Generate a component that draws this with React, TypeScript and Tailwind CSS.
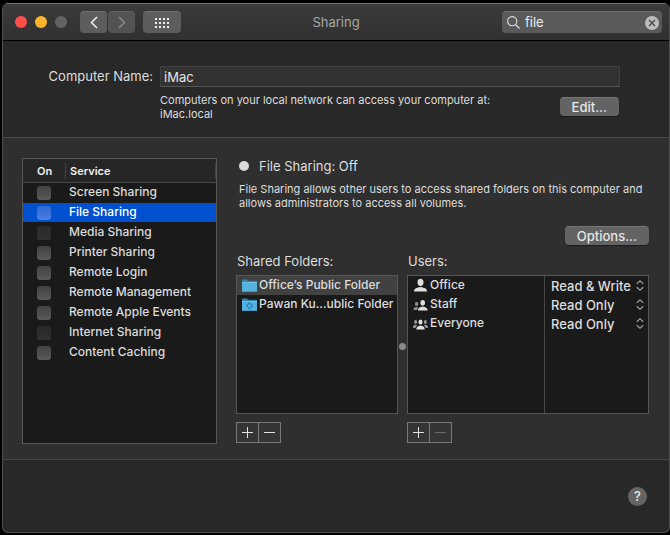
import { useState } from "react";
import type { ReactNode } from "react";

type Service = { name: string; available: boolean };

const services: Service[] = [
  { name: "Screen Sharing", available: true },
  { name: "File Sharing", available: true },
  { name: "Media Sharing", available: false },
  { name: "Printer Sharing", available: true },
  { name: "Remote Login", available: true },
  { name: "Remote Management", available: true },
  { name: "Remote Apple Events", available: true },
  { name: "Internet Sharing", available: false },
  { name: "Content Caching", available: true },
];

const folders = [
  { name: "Office’s Public Folder", dropBox: false },
  { name: "Pawan Ku...ublic Folder", dropBox: true },
];

function FolderIcon({ dropBox }: { dropBox: boolean }) {
  return (
    <svg width="15" height="13" viewBox="0 0 15 13" aria-hidden="true" className="shrink-0">
      <path d="M0 1.2Q0 .5.7.5H5l1.2 1.3H15V4H0z" fill="#2f86ad" />
      <rect y="3" width="15" height="10" rx=".5" fill="#56b1dc" />
      <path d="M0 3h15v1H0z" fill="#6fc2e6" />
      <path d="M0 12h15v1H0z" fill="#4399c4" />
      {dropBox && <path d="M7.5 4.8 10.3 7.8 7.5 10.8 4.7 7.8z" fill="#56b1dc" stroke="#2b86cb" strokeWidth="1.4" />}
    </svg>
  );
}

function OneUserIcon() {
  return (
    <svg width="15" height="14" viewBox="0 0 15 14" aria-hidden="true" className="shrink-0">
      <ellipse cx="7.5" cy="4.300" rx="3" ry="3.600" fill="#dfdfdf" />
      <path d="M1 13.5c0-3 2-3.800 6.500-4.600 4.500.8 6.500 1.600 6.500 4.600z" fill="#dfdfdf" />
    </svg>
  );
}

function TwoUsersIcon() {
  return (
    <svg width="15" height="14" viewBox="0 0 15 14" aria-hidden="true" className="shrink-0">
      <ellipse cx="3.600" cy="7" rx="1.700" ry="2.100" fill="#8f8f8f" />
      <path d="M.5 13c0-2.200 1.300-3 3.100-3 .8 0 1.200.2 1.500.4L4 13z" fill="#8f8f8f" />
      <ellipse cx="9.700" cy="5.800" rx="2.300" ry="2.800" fill="#dfdfdf" />
      <path d="M5 13.500c0-2.600 1.600-3.400 4.700-4 3.100.6 4.800 1.400 4.800 4z" fill="#dfdfdf" />
    </svg>
  );
}

function ThreeUsersIcon() {
  return (
    <svg width="15" height="14" viewBox="0 0 15 14" aria-hidden="true" className="shrink-0">
      <ellipse cx="2.600" cy="6" rx="1.500" ry="1.900" fill="#9a9a9a" />
      <ellipse cx="12.400" cy="6" rx="1.500" ry="1.900" fill="#9a9a9a" />
      <path d="M0 12c0-2.200 1-3.200 2.600-3.200.7 0 1.100.2 1.400.4L2.300 12zM15 12c0-2.200-1-3.200-2.600-3.200-.7 0-1.100.2-1.400.4l1.700 2.800z" fill="#9a9a9a" />
      <ellipse cx="7.500" cy="6" rx="2.100" ry="2.600" fill="#dfdfdf" />
      <path d="M3.300 13.500c0-2.600 1.400-3.500 4.200-4.100 2.800.6 4.200 1.500 4.200 4.100z" fill="#dfdfdf" />
    </svg>
  );
}

const users = [
  { name: "Office", icon: <OneUserIcon />, access: "Read & Write" },
  { name: "Staff", icon: <TwoUsersIcon />, access: "Read Only" },
  { name: "Everyone", icon: <ThreeUsersIcon />, access: "Read Only" },
];

function PushButton({ children }: { children: ReactNode }) {
  return (
    <button className="h-[19px] shrink-0 rounded border-t border-[#767676] bg-[#636363] px-3 text-[13px] leading-4 font-medium text-[#e6e6e6] shadow-[0_1px_1px_#1c1c1c]">
      {children}
    </button>
  );
}

function AddRemove({ what, canRemove }: { what: string; canRemove: boolean }) {
  return (
    <div className="mt-2 flex">
      <button aria-label={`Add ${what}`} className="flex h-[21px] w-[23px] items-center justify-center border border-[#787878] bg-[#353535] text-[#e4e4e4]">
        <svg width="11" height="11" viewBox="0 0 11 11" aria-hidden="true">
          <path d="M0 5.500h11M5.500 0v11" stroke="currentColor" />
        </svg>
      </button>
      <button
        aria-label={`Remove ${what}`}
        disabled={!canRemove}
        className="flex h-[21px] w-[22px] items-center justify-center border border-l-0 border-[#787878] bg-[#353535] text-[#e4e4e4] disabled:text-[#6a6a6a]"
      >
        <svg width="11" height="11" viewBox="0 0 11 11" aria-hidden="true">
          <path d="M0 5.500h11" stroke="currentColor" />
        </svg>
      </button>
    </div>
  );
}

function TitleBar() {
  const [query, setQuery] = useState("file");
  return (
    <header className="grid h-[38px] grid-cols-[1fr_auto_1fr] items-center border-t border-b border-t-[#757575] border-b-black bg-linear-to-b from-[#3b3b3b] to-[#303030]">
      <div className="flex items-center pl-3">
        <div className="flex gap-2">
          <button aria-label="Close" className="size-3 rounded-full bg-[#ff4f49]" />
          <button aria-label="Minimize" className="size-3 rounded-full bg-[#fdb62c]" />
          <button aria-label="Zoom" disabled className="size-3 rounded-full bg-[#636363]" />
        </div>
        <div className="ml-[13px] flex gap-px">
          <button aria-label="Back" className="flex h-[22px] w-[27px] items-center justify-center rounded border-t border-[#707070] bg-[#5d5d5d] text-[#ececec]">
            <svg width="8" height="13" viewBox="0 0 8 13" fill="none" aria-hidden="true">
              <path d="M7 1 1.500 6.500 7 12" stroke="currentColor" strokeWidth="1.600" />
            </svg>
          </button>
          <button aria-label="Forward" disabled className="flex h-[22px] w-[27px] items-center justify-center rounded border-t border-[#636363] bg-[#535353] text-[#868686]">
            <svg width="8" height="13" viewBox="0 0 8 13" fill="none" aria-hidden="true">
              <path d="M1 1 6.500 6.500 1 12" stroke="currentColor" strokeWidth="1.600" />
            </svg>
          </button>
        </div>
        <button aria-label="Show all" className="ml-2 flex h-[22px] w-[38px] items-center justify-center rounded border-t border-[#707070] bg-[#5d5d5d]">
          <svg width="14" height="10" viewBox="0 0 14 10" fill="#f0f0f0" aria-hidden="true">
            {[0, 4, 8].map((y) => [0, 4, 8, 12].map((x) => <rect key={`${x}-${y}`} x={x} y={y} width="2" height="2" />))}
          </svg>
        </button>
      </div>
      <h1 className="pt-0.5 text-[13px] text-[#a6a6a6]">Sharing</h1>
      <div className="mr-[7px] flex h-[22px] w-40 items-center justify-self-end rounded border-t border-[#6c6c6c] bg-[#5a5a5a] pr-[3px] pl-[5px]">
        <svg width="13" height="13" viewBox="0 0 13 13" fill="none" stroke="#e0e0e0" aria-hidden="true" className="shrink-0">
          <circle cx="5.200" cy="5.200" r="4.600" strokeWidth="1.100" />
          <path d="m8.500 8.500 4 4" strokeWidth="1.200" />
        </svg>
        <input
          aria-label="Search"
          value={query}
          onChange={(event) => setQuery(event.target.value)}
          className="ml-[5px] min-w-0 flex-1 bg-transparent text-[13px] text-[#ececec] outline-none"
        />
        <button aria-label="Clear search" onClick={() => setQuery("")} className="shrink-0">
          <svg width="14" height="14" viewBox="0 0 14 14" aria-hidden="true">
            <circle cx="7" cy="7" r="7" fill="#bdbdbd" />
            <path d="m4 4 6 6m0-6-6 6" stroke="#484848" strokeWidth="1.400" />
          </svg>
        </button>
      </div>
    </header>
  );
}

function ServiceList() {
  const [selected, setSelected] = useState("File Sharing");
  return (
    <div className="h-[286px] w-[195px] shrink-0 border border-[#565656] bg-[#1a1a1a]">
      <table className="w-full table-fixed border-separate border-spacing-0">
        <thead>
          <tr className="h-6 bg-[#262626] text-left text-[11px] leading-4 text-[#f2f2f2]">
            <th className="w-[42px] border-b border-[#464646] p-0 pl-[14px] font-semibold">On</th>
            <th className="border-b border-[#464646] p-0 font-semibold">
              <div className="border-x border-[#414141] pl-1">Service</div>
            </th>
          </tr>
        </thead>
        <tbody>
          {services.map(({ name, available }, index) => (
            <tr
              key={name}
              onClick={() => setSelected(name)}
              aria-selected={selected === name}
              className="group h-5 text-[12px] leading-4 text-[#dcdcdc] aria-selected:text-white"
            >
              <td className="border-b border-[#1a1a1a] p-0 pl-[14px] group-aria-selected:bg-[#0050cf]">
                <input
                  id={`service-${index}`}
                  type="checkbox"
                  disabled={!available}
                  className="mt-px block size-[14px] appearance-none rounded-[3px] bg-linear-to-b from-[#424242] to-[#5a5a5a] checked:from-[#2c7cf0] checked:to-[#1262d8] disabled:from-[#292929] disabled:to-[#313131] group-aria-selected:from-[#2c69d4] group-aria-selected:to-[#487fdf]"
                />
              </td>
              <td className="border-b border-[#1a1a1a] p-0 pl-1 group-aria-selected:bg-[#0050cf]">
                <label htmlFor={`service-${index}`} className="block pb-0.5 font-medium">{name}</label>
              </td>
            </tr>
          ))}
        </tbody>
      </table>
    </div>
  );
}

function SharedFolders() {
  const [selected, setSelected] = useState(0);
  return (
    <section className="w-[162px] shrink-0">
      <h2 className="pl-px text-[13px] leading-4 text-[#dedede]">Shared Folders:</h2>
      <ul className="mt-1.5 h-[139px] border border-[#565656] bg-[#1a1a1a]">
        {folders.map(({ name, dropBox }, index) => (
          <li key={name}>
            <button
              onClick={() => setSelected(index)}
              aria-pressed={selected === index}
              className="flex h-[19px] w-full items-center gap-0.5 pb-px pl-[5px] text-[12px] leading-4 font-medium whitespace-nowrap text-[#dedede] aria-pressed:bg-[#414141]"
            >
              <FolderIcon dropBox={dropBox} />
              {name}
            </button>
          </li>
        ))}
      </ul>
      <AddRemove what="folder" canRemove />
    </section>
  );
}

function Users() {
  return (
    <section className="min-w-0 flex-1">
      <h2 className="pl-px text-[13px] leading-4 text-[#dedede]">Users:</h2>
      <div className="mt-1.5 flex h-[139px] border border-[#565656] bg-[#1a1a1a] leading-4 text-[#dedede]">
        <ul className="flex-1 border-r border-[#464646] text-[12px] font-medium">
          {users.map(({ name, icon }) => (
            <li key={name} className="flex h-[19px] items-center gap-0.5 pb-px pl-[5px]">
              {icon}
              {name}
            </li>
          ))}
        </ul>
        <div className="w-[103px] text-[13px]">
          {users.map(({ name, access }) => (
            <div key={name} className="flex h-[19px] items-center pr-1 pl-1.5">
              <select
                aria-label={`Access for ${name}`}
                defaultValue={access}
                className="-mr-2 min-w-0 flex-1 appearance-none bg-transparent font-medium outline-none"
              >
                <option>Read &amp; Write</option>
                <option>Read Only</option>
                <option>Write Only (Drop Box)</option>
              </select>
              <svg width="8" height="11" viewBox="0 0 8 11" fill="none" stroke="#9c9c9c" strokeWidth="1.200" aria-hidden="true" className="pointer-events-none shrink-0">
                <path d="M.8 3.800 4 .8l3.200 3M.8 7.200l3.200 3 3.200-3" />
              </svg>
            </div>
          ))}
        </div>
      </div>
      <AddRemove what="user" canRemove={false} />
    </section>
  );
}

export default function App() {
  return (
    <div className="flex min-h-screen flex-col bg-black pt-[3px] pb-[2px] pl-[2px] font-['Inter','Liberation_Sans',sans-serif]">
      <main className="flex flex-1 flex-col overflow-hidden rounded-md border border-t-0 border-[#505050] bg-[#282828]">
        <TitleBar />

        <section className="grid grid-cols-[150px_1fr] gap-x-[7px] pt-[25px] pr-[49px] pb-[9px]">
          <label htmlFor="computer-name" className="text-right text-[13px] leading-[21px] whitespace-nowrap text-[#dedede]">
            Computer Name:
          </label>
          <input
            id="computer-name"
            defaultValue="iMac"
            className="h-[21px] min-w-0 border border-[#404040] border-b-[#565656] bg-[#323232] px-[3px] text-[13px] text-[#e6e6e6] outline-none"
          />
          <div className="col-start-2 flex items-start justify-between pt-1.5 pr-px">
            <p className="text-[11px] leading-[14px] text-[#dedede]">
              Computers on your local network can access your computer at:
              <br />
              iMac.local
            </p>
            <div className="flex pt-1 pb-3">
              <PushButton>Edit...</PushButton>
            </div>
          </div>
        </section>

        <section className="flex gap-[19px] border-y border-[#484848] bg-[#2f2f2f] pt-5 pr-5 pb-[15px] pl-[19px]">
          <ServiceList />
          <div className="min-w-0 flex-1">
            <div className="flex items-center gap-2.5 pl-[3px]">
              <span className="size-2.5 rounded-full bg-[#dcdcdc]" />
              <h2 className="text-[13px] leading-4 text-[#dedede]">File Sharing: Off</h2>
            </div>
            <p className="mt-2 pl-[3px] text-[11px] leading-[14px] text-[#dedede]">
              File Sharing allows other users to access shared folders on this computer and allows administrators to access all volumes.
            </p>
            <div className="mt-4 flex justify-end">
              <PushButton>Options...</PushButton>
            </div>
            <div className="mt-2 flex gap-px">
              <SharedFolders />
              <div aria-hidden="true" className="mt-[90px] size-[7px] shrink-0 rounded-full bg-[#8a8a8a]" />
              <Users />
            </div>
          </div>
        </section>

        <footer className="flex flex-1 items-center justify-end pr-[22px]">
          <button aria-label="Help" className="flex size-[19px] items-center justify-center rounded-full bg-[#646464] text-[13px] leading-4 font-medium text-[#ececec]">
            ?
          </button>
        </footer>
      </main>
    </div>
  );
}
